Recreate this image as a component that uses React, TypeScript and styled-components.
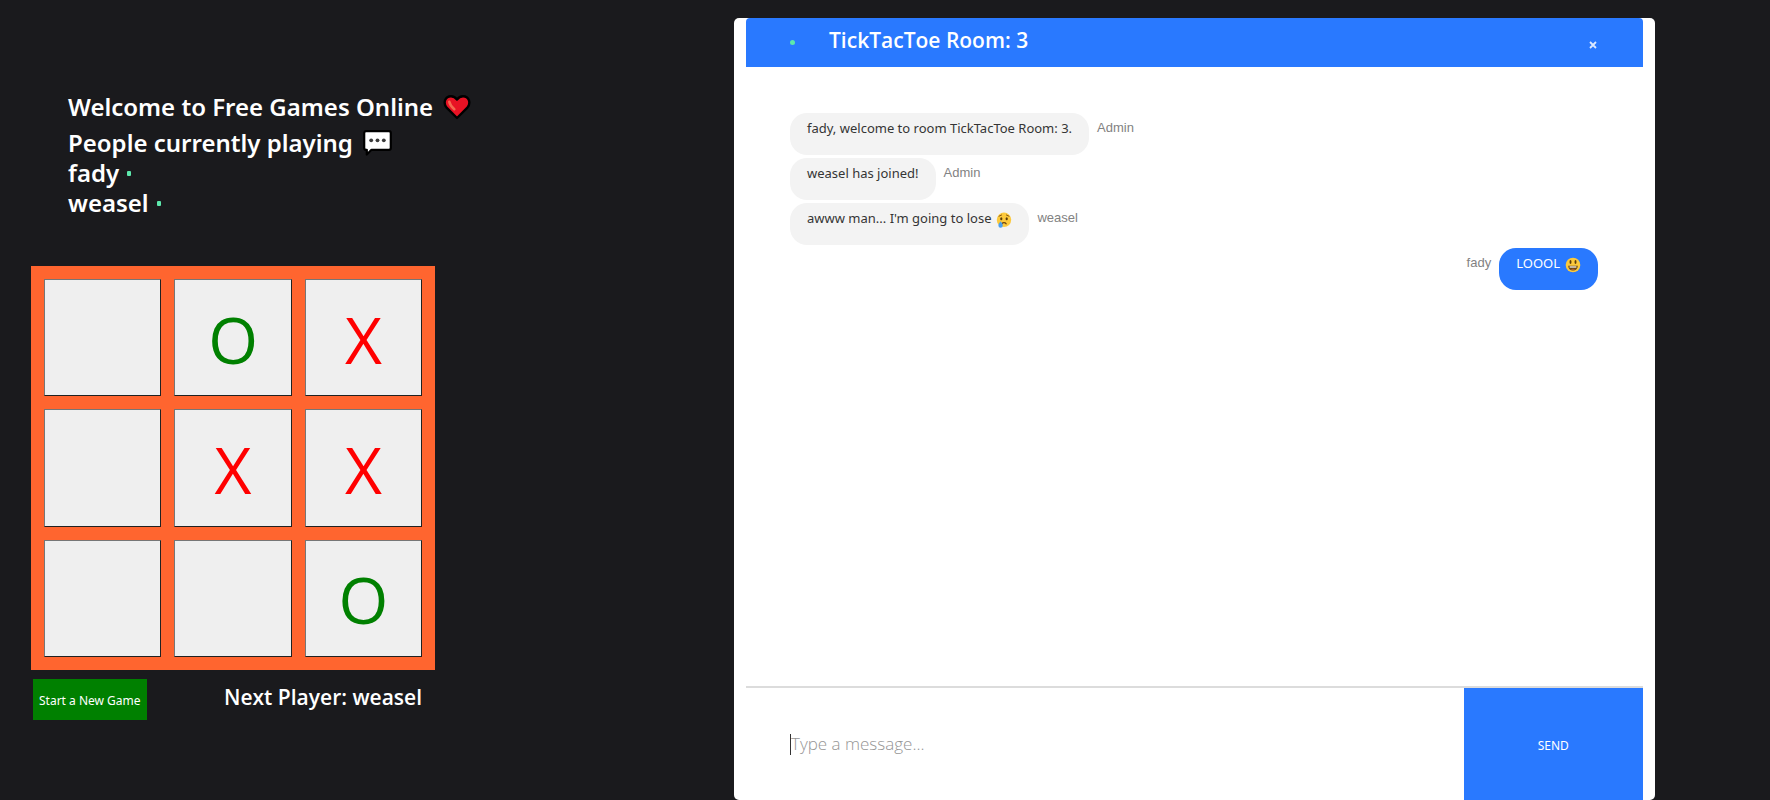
import React, { useState } from "react";
import styled, { createGlobalStyle } from "styled-components";

const GlobalStyle = createGlobalStyle`
  *, *::before, *::after { box-sizing: border-box; }
  body {
    margin: 0;
    background: #1a1a1d;
    font-family: "Segoe UI", "Open Sans", sans-serif;
  }
  button, input { font-family: inherit; }
`;

const notoStack = `"Segoe UI", "Noto Sans", sans-serif`;

const Page = styled.main`
  display: grid;
  grid-template-columns: 734fr 921fr 115fr;
  min-height: 100vh;
`;

const GameColumn = styled.section`
  padding: 92px 31px 0;
`;

const Intro = styled.div`
  margin: 0 0 48px;
  padding-left: 37px;
  color: #fff;
  font-family: ${notoStack};
`;

const IntroHeading = styled.h1`
  display: flex;
  align-items: center;
  gap: 10px;
  margin: 0 0 6px;
  font-size: 24px;
  font-weight: 600;
  line-height: 30px;
`;

const PlayersHeading = styled(IntroHeading).attrs({ as: "h2" })`
  margin: 0;
`;

const PlayerList = styled.ul`
  margin: 0;
  padding: 0;
  list-style: none;
`;

const PlayerItem = styled.li`
  display: flex;
  align-items: center;
  gap: 8px;
  font-size: 24px;
  font-weight: 600;
  line-height: 30px;
`;

const OnlineDot = styled.span<{ $size: number }>`
  width: ${(p) => p.$size}px;
  height: 5px;
  border-radius: ${(p) => (p.$size > 4 ? 3 : 1)}px;
  background: #5de8ac;
`;

const Game = styled.div`
  width: 404px;
  max-width: 100%;
`;

const Board = styled.div`
  display: grid;
  grid-template-columns: repeat(3, 1fr);
  gap: 13px;
  padding: 13px;
  background: #ff652f;
`;

const Cell = styled.button<{ $mark: string }>`
  aspect-ratio: 1;
  padding: 4px 0 0;
  border: 1px solid;
  border-color: #767676 #212121 #212121 #767676;
  background: #efefef;
  color: ${(p) => (p.$mark === "X" ? "#ff0000" : "#008000")};
  font-size: 64px;
  line-height: 64px;
`;

const GameFooter = styled.div`
  display: flex;
  align-items: flex-start;
  justify-content: space-between;
  padding: 9px 13px 0 2px;
`;

const NewGameButton = styled.button`
  height: 41px;
  padding: 2px 6px 0;
  border: 0;
  background: #008000;
  color: #fff;
  font-family: ${notoStack};
  font-size: 12px;
`;

const NextPlayer = styled.p`
  margin: 0;
  color: #fff;
  font-size: 21px;
  font-weight: 600;
  line-height: 36px;
`;

const ChatPanel = styled.section`
  display: flex;
  flex-direction: column;
  margin-top: 18px;
  padding: 0 12px;
  border-radius: 5px;
  background: #fff;
`;

const ChatHeader = styled.header`
  display: flex;
  align-items: center;
  height: 49px;
  padding: 0 46px 0 44px;
  border-radius: 4px 4px 0 0;
  background: #2979ff;
  color: #fff;
`;

const RoomTitle = styled.h2`
  flex: 1;
  margin: 0 0 0 34px;
  font-size: 21px;
  font-weight: 600;
  line-height: 30px;
  padding-bottom: 6px;
`;

const CloseButton = styled.button`
  display: flex;
  padding: 4px 0 0 8px;
  border: 0;
  background: none;
  color: #dce9ff;
`;

const Messages = styled.ol`
  flex: 1;
  display: flex;
  flex-direction: column;
  gap: 3px;
  margin: 0;
  padding: 46px 45px 20px 44px;
  list-style: none;
`;

const MessageRow = styled.li<{ $own?: boolean }>`
  display: flex;
  flex-direction: ${(p) => (p.$own ? "row-reverse" : "row")};
  gap: 8px;
`;

const Bubble = styled.p<{ $own?: boolean }>`
  display: flex;
  gap: 5px;
  height: 42px;
  margin: 0;
  padding: 5px 17px;
  border-radius: 17px;
  background: ${(p) => (p.$own ? "#2979ff" : "#f3f3f3")};
  color: ${(p) => (p.$own ? "#fff" : "#353535")};
  font-family: ${notoStack};
  font-size: 13px;
  line-height: 20px;
`;

const Sender = styled.span`
  padding-top: 5px;
  color: #828282;
  font-family: Helvetica, "Liberation Sans", sans-serif;
  font-size: 13px;
  line-height: 20px;
`;

const MessageForm = styled.form`
  display: flex;
  height: 114px;
  border-top: 2px solid #dcdcdc;
`;

const MessageField = styled.label`
  flex: 1;
  display: flex;
  align-items: center;
  padding-left: 44px;
`;

const Caret = styled.span`
  width: 1px;
  height: 21px;
  background: #333;
`;

const MessageInput = styled.input`
  flex: 1;
  min-width: 0;
  padding: 0;
  border: 0;
  outline: 0;
  font-size: 17px;
  font-weight: 300;
  line-height: 26px;
  &::placeholder { color: #959595; opacity: 1; }
`;

const SendButton = styled.button`
  width: 20%;
  padding-top: 4px;
  border: 0;
  background: #2979ff;
  color: #fff;
  font-family: ${notoStack};
  font-size: 12px;
`;

const EmojiIcon = styled.svg`
  flex: none;
  display: block;
`;

const FaceIcon = styled(EmojiIcon)`
  margin-top: 4px;
`;

const Heart = () => (
  <EmojiIcon width="28" height="26" viewBox="0 0 28 26" role="img" aria-label="heart">
    <path d="M14 24 3.6 13.6C-.2 9 2 2.200 8 2.200c2.600 0 4.600 1.300 6 3.400 1.400-2.100 3.400-3.400 6-3.400 6 0 8.200 6.800 4.400 11.400Z" fill="#e81224" stroke="#000" strokeWidth="2.400" strokeLinejoin="round" />
    <path d="M6.300 7.800c.5 3 2.400 5.200 5 7.400" fill="none" stroke="#f4694f" strokeWidth="2.600" strokeLinecap="round" />
  </EmojiIcon>
);

const Speech = () => (
  <EmojiIcon width="29" height="26" viewBox="0 0 29 26" role="img" aria-label="speech bubble">
    <path d="M3 1.200h23a1.800 1.800 0 0 1 1.800 1.800v15a1.800 1.800 0 0 1-1.800 1.800H8.500L3.800 24.500v-4.700H3A1.800 1.800 0 0 1 1.200 18V3A1.800 1.800 0 0 1 3 1.200Z" fill="#fff" stroke="#000" strokeWidth="2.200" strokeLinejoin="round" />
    <circle cx="8.200" cy="10.300" r="1.900" fill="#3b3b3b" />
    <circle cx="14.500" cy="10.300" r="1.900" fill="#3b3b3b" />
    <circle cx="20.800" cy="10.300" r="1.900" fill="#3b3b3b" />
  </EmojiIcon>
);

const CryFace = () => (
  <FaceIcon width="16" height="16" viewBox="0 0 16 16" role="img" aria-label="crying face">
    <circle cx="8" cy="7.800" r="7.200" fill="#fcc93c" />
    <path d="M3 4.200 5.600 3M13 4.200 10.400 3" stroke="#8a5a14" strokeWidth="1" strokeLinecap="round" />
    <ellipse cx="5.300" cy="6.800" rx="1.100" ry="1.500" fill="#5c3d0c" />
    <ellipse cx="10.700" cy="6.800" rx="1.100" ry="1.500" fill="#5c3d0c" />
    <path d="M5.800 11.800c1.100-1.500 3.300-1.500 4.400 0" fill="none" stroke="#6b4510" strokeWidth="1.200" strokeLinecap="round" />
    <path d="M4.600 9.300c1.300 1.700 2.200 2.900 2.200 4.300a2.200 2.200 0 0 1-4.400 0c0-1.400.9-2.600 2.200-4.300Z" fill="#4a9fef" />
  </FaceIcon>
);

const SmileFace = () => (
  <FaceIcon width="16" height="16" viewBox="0 0 16 16" role="img" aria-label="grinning face">
    <circle cx="8" cy="8" r="7.300" fill="#fcc93c" />
    <ellipse cx="5.500" cy="5" rx="1" ry="1.900" fill="#5c3d0c" />
    <ellipse cx="10.500" cy="5" rx="1" ry="1.900" fill="#5c3d0c" />
    <path d="M3.200 8.800h9.600c0 3-2 4.700-4.800 4.700s-4.800-1.700-4.800-4.700Z" fill="#6b4814" />
    <path d="M4.600 9.400h6.800v1.200H4.600Z" fill="#fff" />
    <path d="M5.800 12.300c1.300-.8 3.100-.8 4.400 0-1.300.7-3.100.7-4.400 0Z" fill="#c9683a" />
  </FaceIcon>
);

const CloseIcon = () => (
  <svg width="8" height="8" viewBox="0 0 8 8" aria-hidden="true">
    <path d="M1 1l6 6M7 1 1 7" stroke="currentColor" strokeWidth="1.800" />
  </svg>
);

const squares = ["", "O", "X", "", "X", "X", "", "", "O"];
const players = ["fady", "weasel"];

interface Message {
  sender: string;
  text: string;
  emoji?: React.ReactNode;
  own?: boolean;
}

const messages: Message[] = [
  { sender: "Admin", text: "fady, welcome to room TickTacToe Room: 3." },
  { sender: "Admin", text: "weasel has joined!" },
  { sender: "weasel", text: "awww man... I'm going to lose", emoji: <CryFace /> },
  { sender: "fady", text: "LOOOL", emoji: <SmileFace />, own: true },
];

export default function App() {
  const [draft, setDraft] = useState("");

  return (
    <>
      <GlobalStyle />
      <Page>
        <GameColumn>
          <Intro>
            <IntroHeading>
              Welcome to Free Games Online <Heart />
            </IntroHeading>
            <PlayersHeading>
              People currently playing <Speech />
            </PlayersHeading>
            <PlayerList>
              {players.map((name) => (
                <PlayerItem key={name}>
                  {name} <OnlineDot $size={4} />
                </PlayerItem>
              ))}
            </PlayerList>
          </Intro>
          <Game>
            <Board>
              {squares.map((mark, i) => (
                <Cell key={i} type="button" $mark={mark} aria-label={mark ? undefined : `Empty square ${i + 1}`}>
                  {mark}
                </Cell>
              ))}
            </Board>
            <GameFooter>
              <NewGameButton type="button">Start a New Game</NewGameButton>
              <NextPlayer>Next Player: weasel</NextPlayer>
            </GameFooter>
          </Game>
        </GameColumn>
        <ChatPanel>
          <ChatHeader>
            <OnlineDot $size={5} />
            <RoomTitle>TickTacToe Room: 3</RoomTitle>
            <CloseButton type="button" aria-label="Leave room">
              <CloseIcon />
            </CloseButton>
          </ChatHeader>
          <Messages>
            {messages.map((m) => (
              <MessageRow key={m.text} $own={m.own}>
                <Bubble $own={m.own}>
                  {m.text}
                  {m.emoji}
                </Bubble>
                <Sender>{m.sender}</Sender>
              </MessageRow>
            ))}
          </Messages>
          <MessageForm onSubmit={(e) => e.preventDefault()}>
            <MessageField>
              {draft === "" && <Caret />}
              <MessageInput
                type="text"
                aria-label="Message"
                placeholder="Type a message..."
                value={draft}
                onChange={(e) => setDraft(e.target.value)}
              />
            </MessageField>
            <SendButton type="submit">SEND</SendButton>
          </MessageForm>
        </ChatPanel>
      </Page>
    </>
  );
}
